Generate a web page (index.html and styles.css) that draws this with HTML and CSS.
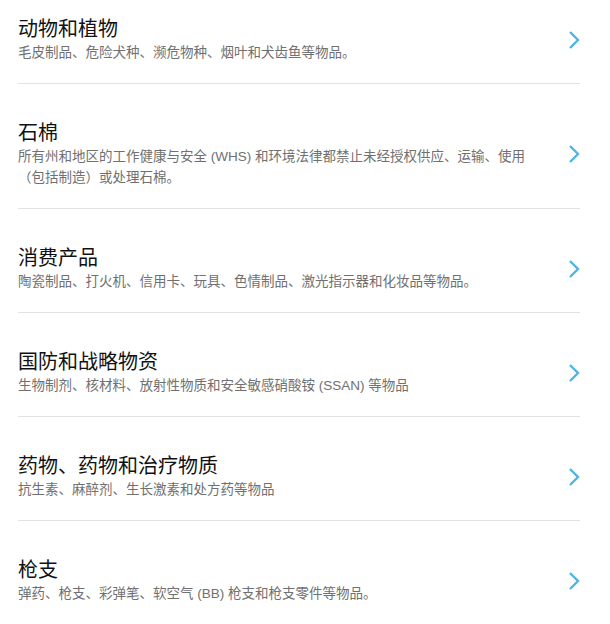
FILE: index.html
```html
<!DOCTYPE html>
<html lang="zh-CN">
<head>
  <meta charset="UTF-8" />
  <title>禁止和限制物品</title>
  <meta name="viewport" content="width=device-width, initial-scale=1.0" />
  <link rel="stylesheet" href="styles.css">
</head>
<body>
  <ul class="list">
    <li class="item">
      <div class="text">
        <div class="title">动物和植物</div>
        <div class="desc">毛皮制品、危险犬种、濒危物种、烟叶和犬齿鱼等物品。</div>
      </div>
      <svg class="chev" viewBox="0 0 12 20"><path d="M2 2 L10 10 L2 18" /></svg>
    </li>
    <li class="item">
      <div class="text">
        <div class="title">石棉</div>
        <div class="desc">所有州和地区的工作健康与安全 (WHS) 和环境法律都禁止未经授权供应、运输、使用（包括制造）或处理石棉。</div>
      </div>
      <svg class="chev" viewBox="0 0 12 20"><path d="M2 2 L10 10 L2 18" /></svg>
    </li>
    <li class="item">
      <div class="text">
        <div class="title">消费产品</div>
        <div class="desc">陶瓷制品、打火机、信用卡、玩具、色情制品、激光指示器和化妆品等物品。</div>
      </div>
      <svg class="chev" viewBox="0 0 12 20"><path d="M2 2 L10 10 L2 18" /></svg>
    </li>
    <li class="item">
      <div class="text">
        <div class="title">国防和战略物资</div>
        <div class="desc">生物制剂、核材料、放射性物质和安全敏感硝酸铵 (SSAN) 等物品</div>
      </div>
      <svg class="chev" viewBox="0 0 12 20"><path d="M2 2 L10 10 L2 18" /></svg>
    </li>
    <li class="item">
      <div class="text">
        <div class="title">药物、药物和治疗物质</div>
        <div class="desc">抗生素、麻醉剂、生长激素和处方药等物品</div>
      </div>
      <svg class="chev" viewBox="0 0 12 20"><path d="M2 2 L10 10 L2 18" /></svg>
    </li>
    <li class="item">
      <div class="text">
        <div class="title">枪支</div>
        <div class="desc">弹药、枪支、彩弹笔、软空气 (BB) 枪支和枪支零件等物品。</div>
      </div>
      <svg class="chev" viewBox="0 0 12 20"><path d="M2 2 L10 10 L2 18" /></svg>
    </li>
  </ul>
</body>
</html>
```

FILE: styles.css
```css
* { box-sizing: border-box; }
body {
  margin: 0;
  background: #fff;
  font-family: "Liberation Sans", "Noto Sans CJK SC", sans-serif;
}
.list {
  list-style: none;
  margin: 0;
  padding: 0 30px 0 18px;
}
.item {
  display: flex;
  align-items: center;
  gap: 20px;
  padding: 36px 0 20px;
  border-bottom: 1px solid #e2e2e2;
}
.item:first-child { padding-top: 16px; }
.item:last-child { border-bottom: none; }
.text { flex: 1; }
.title {
  font-size: 20px;
  line-height: 26px;
  color: #111;
}
.desc {
  font-size: 13.5px;
  line-height: 21px;
  color: #707070;
}
.chev {
  width: 12px;
  height: 20px;
  flex-shrink: 0;
}
.chev path {
  fill: none;
  stroke: #4fb3e3;
  stroke-width: 2.4;
}
```
